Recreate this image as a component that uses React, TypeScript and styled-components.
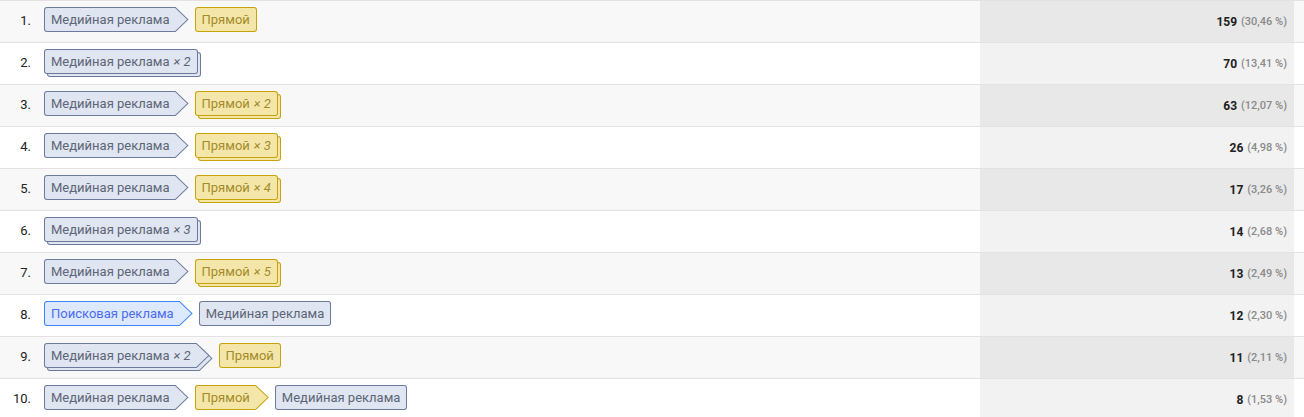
import React from 'react'
import styled, { createGlobalStyle, css } from 'styled-components'

const GlobalStyle = createGlobalStyle`
  html, body {
    margin: 0;
    padding: 0;
    background: #ffffff;
    font-family: Roboto, 'Liberation Sans', Arial, sans-serif;
  }
`

type Kind = 'display' | 'direct' | 'search'

const palette: Record<Kind, { bg: string; border: string; text: string }> = {
  display: { bg: '#dfe5f1', border: '#6c7a9b', text: '#5d6576' },
  direct: { bg: '#f4e6a8', border: '#c6a30a', text: '#a38b2c' },
  search: { bg: '#dde9fe', border: '#3d86f6', text: '#4d6cee' },
}

const labels: Record<Kind, string> = {
  display: 'Медийная реклама',
  direct: 'Прямой',
  search: 'Поисковая реклама',
}

const ARROW = 13

const Table = styled.div`
  width: 1304px;
  border-top: 1px solid #e2e2e2;
`

const Row = styled.div<{ striped: boolean }>`
  display: grid;
  grid-template-columns: 31px 1fr 314px 10px;
  height: 41px;
  border-bottom: 1px solid #e2e2e2;
  background: ${(p) => (p.striped ? '#f8f8f8' : '#ffffff')};
`

const Index = styled.div`
  display: flex;
  align-items: center;
  justify-content: flex-end;
  padding-bottom: 2px;
  font-size: 13px;
  color: #222222;
`

const Path = styled.div`
  display: flex;
  align-items: flex-start;
  padding: 6px 0 0 13px;
`

const Value = styled.div<{ striped: boolean }>`
  display: flex;
  align-items: center;
  justify-content: flex-end;
  gap: 4px;
  padding-right: 7px;
  background: ${(p) => (p.striped ? '#e8e8e8' : '#f2f2f2')};
`

const Count = styled.span`
  font-size: 12px;
  font-weight: 700;
  color: #212121;
`

const Share = styled.span`
  font-size: 11px;
  font-weight: 500;
  color: #8a8a8a;
`

const Step = styled.div<{ stacked: boolean }>`
  position: relative;
  display: inline-flex;
  margin-right: ${(p) => (p.stacked ? 9 : 6)}px;
`

const shapeCss = css<{ kind: Kind; arrow: boolean }>`
  box-sizing: border-box;
  height: 25px;
  padding: 1px;
  background: ${(p) => palette[p.kind].border};
  border-radius: ${(p) => (p.arrow ? '3px 0 0 3px' : '3px')};
  clip-path: ${(p) =>
    p.arrow
      ? `polygon(0 0, calc(100% - ${ARROW}px) 0, 100% 50%, calc(100% - ${ARROW}px) 100%, 0 100%)`
      : 'none'};
`

const Shape = styled.div<{ kind: Kind; arrow: boolean }>`
  ${shapeCss}
  position: relative;
  z-index: 1;
`

const Behind = styled.div<{ kind: Kind; arrow: boolean }>`
  ${shapeCss}
  position: absolute;
  left: 3px;
  top: 3px;
  width: 100%;
`

const Fill = styled.div<{ kind: Kind; arrow: boolean }>`
  box-sizing: border-box;
  height: 100%;
  display: flex;
  align-items: center;
  padding: 0 ${(p) => (p.arrow ? ARROW + 5 : 6)}px 0 6px;
  background: ${(p) => palette[p.kind].bg};
  color: ${(p) => palette[p.kind].text};
  font-size: 13px;
  white-space: nowrap;
  border-radius: ${(p) => (p.arrow ? '2px 0 0 2px' : '2px')};
  clip-path: ${(p) =>
    p.arrow
      ? `polygon(0 0, calc(100% - ${ARROW - 0.6}px) 0, calc(100% - 0.4px) 50%, calc(100% - ${ARROW - 0.6}px) 100%, 0 100%)`
      : 'none'};
`

const Times = styled.i`
  margin-left: 4px;
`

type StepData = { kind: Kind; times?: number }

function Chip({ step, arrow }: { step: StepData; arrow: boolean }) {
  const stacked = (step.times ?? 1) > 1
  return (
    <Step stacked={stacked}>
      {stacked && (
        <Behind kind={step.kind} arrow={arrow}>
          <Fill kind={step.kind} arrow={arrow} />
        </Behind>
      )}
      <Shape kind={step.kind} arrow={arrow}>
        <Fill kind={step.kind} arrow={arrow}>
          {labels[step.kind]}
          {stacked && <Times>× {step.times}</Times>}
        </Fill>
      </Shape>
    </Step>
  )
}

const rows: { path: StepData[]; count: number; share: string }[] = [
  { path: [{ kind: 'display' }, { kind: 'direct' }], count: 159, share: '30,46' },
  { path: [{ kind: 'display', times: 2 }], count: 70, share: '13,41' },
  { path: [{ kind: 'display' }, { kind: 'direct', times: 2 }], count: 63, share: '12,07' },
  { path: [{ kind: 'display' }, { kind: 'direct', times: 3 }], count: 26, share: '4,98' },
  { path: [{ kind: 'display' }, { kind: 'direct', times: 4 }], count: 17, share: '3,26' },
  { path: [{ kind: 'display', times: 3 }], count: 14, share: '2,68' },
  { path: [{ kind: 'display' }, { kind: 'direct', times: 5 }], count: 13, share: '2,49' },
  { path: [{ kind: 'search' }, { kind: 'display' }], count: 12, share: '2,30' },
  { path: [{ kind: 'display', times: 2 }, { kind: 'direct' }], count: 11, share: '2,11' },
  { path: [{ kind: 'display' }, { kind: 'direct' }, { kind: 'display' }], count: 8, share: '1,53' },
]

export default function App() {
  return (
    <>
      <GlobalStyle />
      <Table>
        {rows.map((r, i) => {
          const striped = i % 2 === 0
          return (
            <Row key={i} striped={striped}>
              <Index>{i + 1}.</Index>
              <Path>
                {r.path.map((s, j) => (
                  <Chip key={j} step={s} arrow={j < r.path.length - 1} />
                ))}
              </Path>
              <Value striped={striped}>
                <Count>{r.count}</Count>
                <Share>({r.share} %)</Share>
              </Value>
              <div />
            </Row>
          )
        })}
      </Table>
    </>
  )
}
